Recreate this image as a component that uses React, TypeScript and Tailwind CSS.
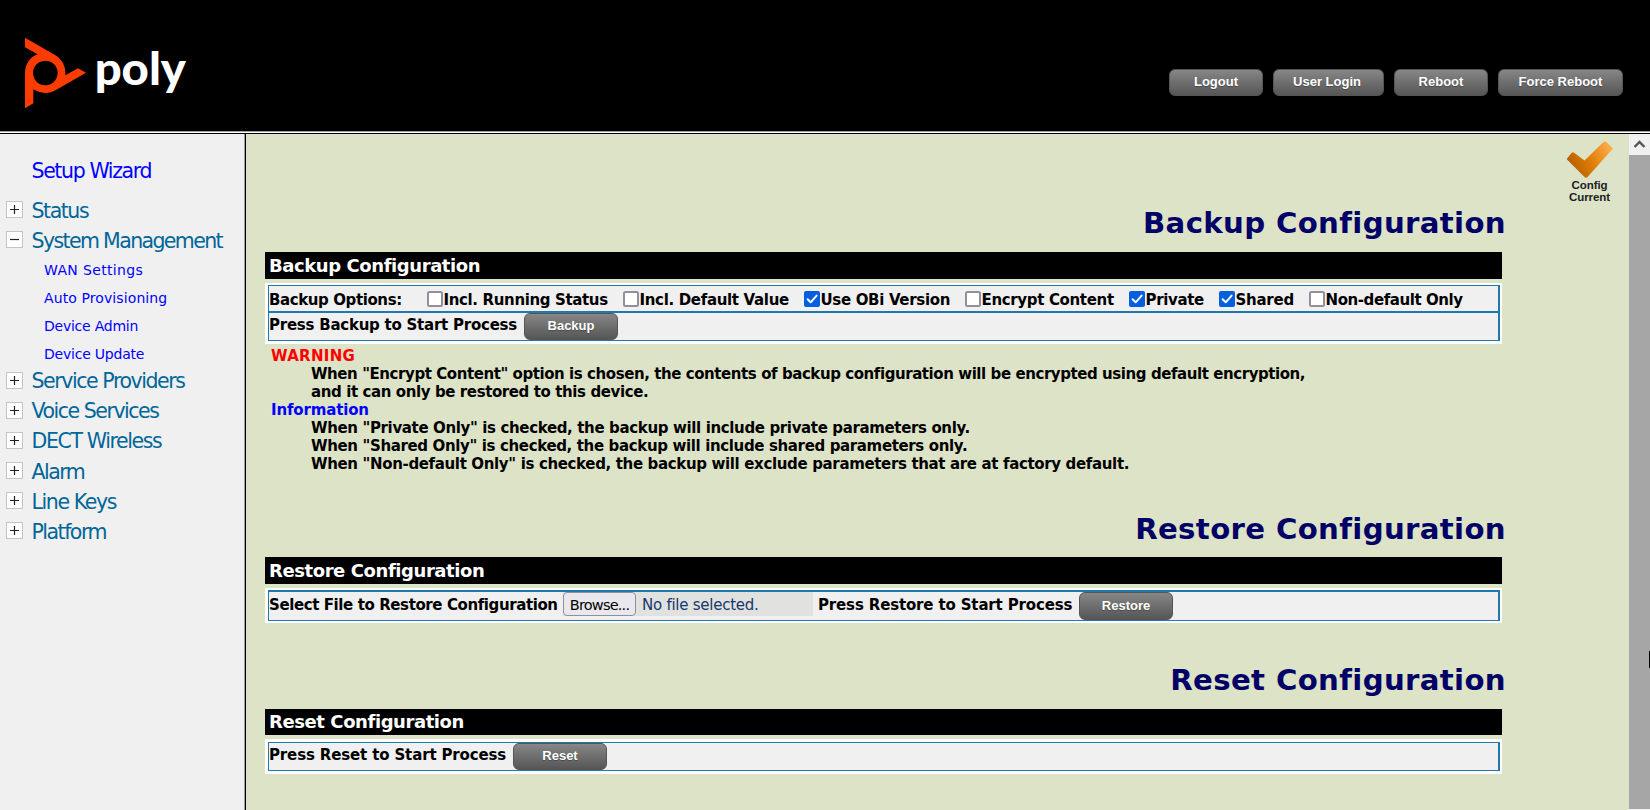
import type { ReactNode } from "react";

function TopButton({ children, className }: { children: ReactNode; className: string }) {
  return (
    <button
      className={`flex shrink-0 justify-center rounded-[6px] border border-[#555] bg-gradient-to-b from-[#878787] to-[#565656] font-['Liberation_Sans',Arial,sans-serif] text-[13px] font-bold text-white [text-shadow:0_1px_1px_rgba(0,0,0,0.3)] ${className}`}
    >
      {children}
    </button>
  );
}

function Logo() {
  return (
    <svg width="260" height="130" viewBox="0 0 780 390" aria-label="poly">
      <path
        fill="#ff3c00"
        fillRule="evenodd"
        d="M75 53 L165 105 C185 117 196 136 196 158 V166 L234 145 L258 158 L168 210 C146 223 121 221 100 208 V250 L75 265 V159 C75 133 90 111 113 103 L75 82 Z M136 122 a37 37 0 1 0 0.1 0 Z"
      />
      <text
        x="284"
        y="194"
        fill="#fff"
        className="font-['Lato',sans-serif] text-[136px] font-black"
        textLength="274"
        lengthAdjust="spacingAndGlyphs"
      >
        poly
      </text>
    </svg>
  );
}

function Toggle({ open }: { open?: boolean }) {
  return (
    <svg width="17" height="17" viewBox="0 0 17 17" className="shrink-0">
      <rect x="0.5" y="0.5" width="16" height="16" fill="#fff" stroke="#c4c4c4" />
      <path d={open ? "M4 8.5H13" : "M4 8.5H13M8.5 4V13"} stroke="#222" strokeWidth="1.2" />
    </svg>
  );
}

function NavItem({ label, open, className }: { label: string; open?: boolean; className: string }) {
  return (
    <li className="flex h-[30px] items-start gap-[8.5px] pl-[6px]">
      <Toggle open={open} />
      <span className={`text-[20.5px] leading-[24px] whitespace-nowrap text-[#006699] ${className}`}>{label}</span>
    </li>
  );
}

function SubItem({ label, className }: { label: string; className: string }) {
  return (
    <li className={`pl-[44px] text-[14px] leading-[18px] whitespace-nowrap text-[#0000ff] ${className}`}>{label}</li>
  );
}

function Check({ label, checked, className }: { label: string; checked?: boolean; className: string }) {
  return (
    <label className={`flex shrink-0 items-center whitespace-nowrap ${className}`}>
      <svg width="16" height="16" viewBox="0 0 16 16" className="-mt-px shrink-0">
        {checked ? (
          <>
            <rect width="16" height="16" rx="2" fill="#0060df" />
            <path d="M3.6 8.2L6.7 11.3L12.6 4.6" fill="none" stroke="#fff" strokeWidth="2" strokeLinecap="round" strokeLinejoin="round" />
          </>
        ) : (
          <rect x="1" y="1" width="14" height="14" rx="1.5" fill="#fff" stroke="#8f8f9d" strokeWidth="2" />
        )}
      </svg>
      <span className="pt-[2px] pl-[0.5px]">{label}</span>
    </label>
  );
}

function Heading({ children, className }: { children: ReactNode; className: string }) {
  return (
    <h1 className={`flex w-[1260px] justify-end text-[29.2px] leading-[36px] font-bold tracking-[0.35px] text-[#000066] ${className}`}>
      {children}
    </h1>
  );
}

function Bar({ children, className }: { children: ReactNode; className: string }) {
  return (
    <h2 className={`ml-[19px] w-[1237px] bg-black pl-[4px] text-[18px] font-bold tracking-[-0.42px] text-white ${className}`}>
      {children}
    </h2>
  );
}

const line = "h-[18px] text-[15px] leading-[18px] whitespace-nowrap";

export default function App() {
  return (
    <div className="flex h-[810px] w-[1650px] flex-col overflow-hidden bg-black font-['DejaVu_Sans',Verdana,sans-serif]">
      <header className="flex h-[131px] shrink-0 justify-between">
        <div className="h-[131px] overflow-hidden pt-[20px]">
          <Logo />
        </div>
        <div className="flex gap-[10px] pt-[69px] pr-[27px]">
          <TopButton className="h-[27px] w-[94px] pt-[2px]">Logout</TopButton>
          <TopButton className="h-[27px] w-[111px] pt-[2px] pr-[3px]">User Login</TopButton>
          <TopButton className="h-[27px] w-[94px] pt-[2px]">Reboot</TopButton>
          <TopButton className="h-[27px] w-[125px] pt-[2px]">Force Reboot</TopButton>
        </div>
      </header>
      <div className="h-px shrink-0 bg-[#a0a0a0]" />
      <div className="h-px shrink-0 bg-white" />
      <div className="h-px shrink-0 bg-black" />

      <div className="flex min-h-0 flex-1">
        <nav className="w-[244px] shrink-0 bg-[#f0f0f0]">
          <a className="block pt-[24px] pl-[31.5px] text-[20.5px] leading-[26px] tracking-[-1.38px] whitespace-nowrap text-[#0000ff]">
            Setup Wizard
          </a>
          <ul className="pt-[17px]">
            <NavItem label="Status" className="-mt-[2px] tracking-[-1.45px]" />
            <NavItem label="System Management" open className="-mt-[2px] tracking-[-1.62px]" />
            <SubItem label="WAN Settings" className="h-[28px] tracking-[0.35px]" />
            <SubItem label="Auto Provisioning" className="h-[28px] tracking-[0.1px]" />
            <SubItem label="Device Admin" className="h-[28px] tracking-[-0.24px]" />
            <SubItem label="Device Update" className="h-[27px] tracking-[-0.22px]" />
            <NavItem label="Service Providers" className="-mt-[3px] tracking-[-1.43px]" />
            <NavItem label="Voice Services" className="-mt-[3px] tracking-[-1.47px]" />
            <NavItem label="DECT Wireless" className="-mt-[3px] tracking-[-1.38px]" />
            <NavItem label="Alarm" className="-mt-[2px] tracking-[-1.5px]" />
            <NavItem label="Line Keys" className="-mt-[2px] tracking-[-1.4px]" />
            <NavItem label="Platform" className="-mt-[2px] tracking-[-1.5px]" />
          </ul>
        </nav>
        <div className="w-px shrink-0 bg-[#a0a0a0]" />
        <div className="w-px shrink-0 bg-black" />

        <main className="relative w-[1383px] shrink-0 bg-[#dde3c7]">
          <div className="absolute top-[6px] left-[1314px] flex w-[60px] flex-col items-center">
            <svg width="48" height="39" viewBox="0 0 48 39">
              <defs>
                <linearGradient id="tick" x1="0" y1="0.6" x2="1" y2="0.2">
                  <stop offset="0" stopColor="#b05f00" />
                  <stop offset="0.45" stopColor="#de7c05" />
                  <stop offset="1" stopColor="#ffaf50" />
                </linearGradient>
              </defs>
              <path
                d="M1 18.5L5.5 13Q7 11.7 8.5 13L18.5 20.5L37.5 2Q39 0.8 40.5 2L47 8.5L21.5 37Q20 38.3 18.5 37L1 19.5Z"
                fill="url(#tick)"
              />
            </svg>
            <p className="pt-px pr-px text-center font-['Liberation_Sans',Arial,sans-serif] text-[11.5px] leading-[11.5px] font-bold tracking-[-0.1px] text-[#1c1c24]">
              Config
              <br />
              Current
            </p>
          </div>

          <Heading className="pt-[71px]">Backup Configuration</Heading>
          <Bar className="mt-[11px] h-[27px] leading-[27px]">Backup Configuration</Bar>
          <div className="mt-[4px] ml-[19px] w-[1237px] bg-white pt-[2px] pr-[2px] pb-[3px] pl-[3px] text-[15px] font-bold text-black">
            <div className="border border-r-2 border-[#2078ac] bg-[#f0f0f0]">
              <div className="flex h-[25px] items-center pt-px">
                <span className="w-[158px] shrink-0 pt-[2px] tracking-[-0.4px] whitespace-nowrap">Backup Options:</span>
                <Check label="Incl. Running Status" className="w-[196px] tracking-[-0.36px]" />
                <Check label="Incl. Default Value" className="w-[181px] tracking-[-0.33px]" />
                <Check label="Use OBi Version" checked className="w-[161px] tracking-[-0.33px]" />
                <Check label="Encrypt Content" className="w-[164px] tracking-[-0.34px]" />
                <Check label="Private" checked className="w-[90px] tracking-[-0.35px]" />
                <Check label="Shared" checked className="w-[90px] tracking-[-0.25px]" />
                <Check label="Non-default Only" className="tracking-[-0.42px]" />
              </div>
              <div className="flex h-[29px] border-t-2 border-[#2078ac]">
                <span className="w-[255px] shrink-0 pt-[3px] leading-[18px] tracking-[-0.24px] whitespace-nowrap">Press Backup to Start Process</span>
                <TopButton className="h-[27px] w-[94px] pt-[2px]">Backup</TopButton>
              </div>
            </div>
          </div>

          <div className="mt-[3px] pl-[25px] font-bold text-black">
            <p className={`${line} tracking-[0.3px] text-[#ff0000]`}>WARNING</p>
            <p className={`${line} pl-[40px] tracking-[-0.43px]`}>When "Encrypt Content" option is chosen, the contents of backup configuration will be encrypted using default encryption,</p>
            <p className={`${line} pl-[40px] tracking-[-0.4px]`}>and it can only be restored to this device.</p>
            <p className={`${line} tracking-[-0.15px] text-[#0000ff]`}>Information</p>
            <p className={`${line} pl-[40px] tracking-[-0.36px]`}>When "Private Only" is checked, the backup will include private parameters only.</p>
            <p className={`${line} pl-[40px] tracking-[-0.36px]`}>When "Shared Only" is checked, the backup will include shared parameters only.</p>
            <p className={`${line} pl-[40px] tracking-[-0.35px]`}>When "Non-default Only" is checked, the backup will exclude parameters that are at factory default.</p>
          </div>

          <Heading className="mt-[38px]">Restore Configuration</Heading>
          <Bar className="mt-[10px] h-[27px] leading-[27px]">Restore Configuration</Bar>
          <div className="mt-[4px] ml-[19px] w-[1237px] bg-white pt-[2px] pr-[2px] pb-[2px] pl-[3px] text-[15px] font-bold text-black">
            <div className="flex h-[31px] border border-t-2 border-r-2 border-[#2078ac] bg-[#f0f0f0]">
              <span className="w-[294px] shrink-0 pt-[4px] leading-[18px] tracking-[-0.4px] whitespace-nowrap">Select File to Restore Configuration</span>
              <div className="flex h-[24px] w-[250px] shrink-0 bg-[#e1e1e0] font-normal whitespace-nowrap">
                <button className="h-[24px] w-[73px] rounded-[4px] border border-[#8f8f9d] bg-[#e9e9ed] pt-[2px] text-[14.5px] leading-[20px] tracking-[-0.8px] text-black">
                  Browse...
                </button>
                <span className="pl-[6px] text-[15px] leading-[26px] tracking-[-0.25px] text-[#15396b]">No file selected.</span>
              </div>
              <span className="w-[266px] shrink-0 pt-[4px] pl-[5px] leading-[18px] tracking-[-0.15px] whitespace-nowrap">Press Restore to Start Process</span>
              <TopButton className="h-[28px] w-[94px] pt-[3px]">Restore</TopButton>
            </div>
          </div>

          <Heading className="mt-[39px]">Reset Configuration</Heading>
          <Bar className="mt-[11px] h-[26px] leading-[26px]">Reset Configuration</Bar>
          <div className="mt-[4px] ml-[19px] w-[1237px] bg-white pt-[3px] pr-[2px] pb-[3px] pl-[3px] text-[15px] font-bold text-black">
            <div className="flex h-[29px] border border-r-2 border-[#2078ac] bg-[#f0f0f0]">
              <span className="w-[244px] shrink-0 pt-[3px] leading-[18px] tracking-[-0.14px] whitespace-nowrap">Press Reset to Start Process</span>
              <TopButton className="h-[27px] w-[94px] pt-[2px]">Reset</TopButton>
            </div>
          </div>
        </main>

        <aside className="relative flex w-[21px] shrink-0 flex-col border-b border-[#f0f0f0] bg-[#a6a6a6]">
          <div className="flex h-[21px] items-center justify-center bg-[#f0f0f0]">
            <svg width="13" height="9" viewBox="0 0 13 9">
              <path d="M1.5 7L6.5 2L11.5 7" fill="none" stroke="#555" strokeWidth="2.4" />
            </svg>
          </div>
          <div className="absolute top-[517px] right-0 h-[17px] w-px bg-black" />
        </aside>
      </div>
    </div>
  );
}
